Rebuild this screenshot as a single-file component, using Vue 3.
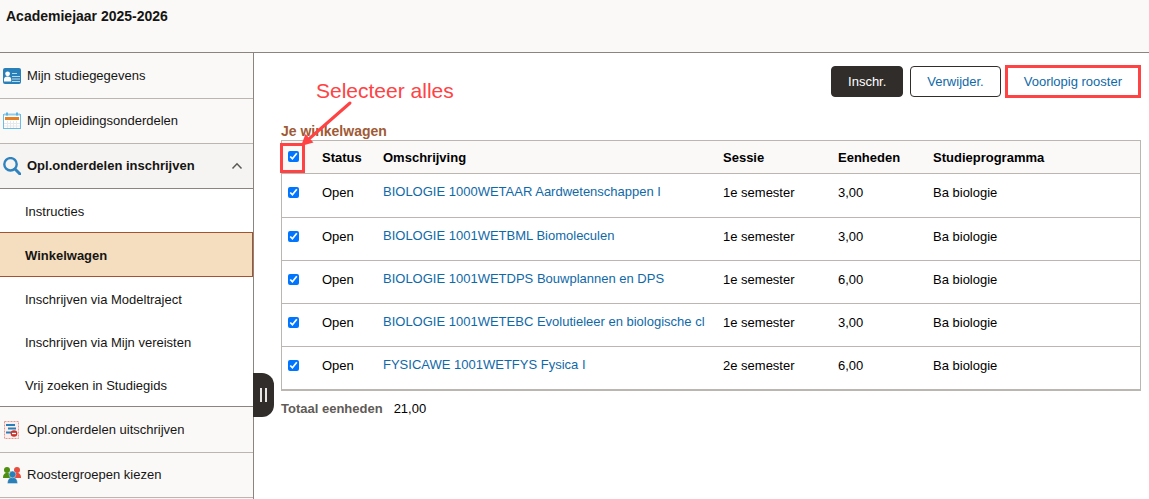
<script setup>
import { ref, computed } from 'vue'

const subItems = [
  'Instructies',
  'Winkelwagen',
  'Inschrijven via Modeltraject',
  'Inschrijven via Mijn vereisten',
  'Vrij zoeken in Studiegids',
]
const active = ref('Winkelwagen')
const open = ref(true)

const courses = ref([
  { title: 'BIOLOGIE 1000WETAAR Aardwetenschappen I', session: '1e semester', units: '3,00', checked: true },
  { title: 'BIOLOGIE 1001WETBML Biomoleculen', session: '1e semester', units: '3,00', checked: true },
  { title: 'BIOLOGIE 1001WETDPS Bouwplannen en DPS', session: '1e semester', units: '6,00', checked: true },
  { title: 'BIOLOGIE 1001WETEBC Evolutieleer en biologische cl', session: '1e semester', units: '3,00', checked: true },
  { title: 'FYSICAWE 1001WETFYS Fysica I', session: '2e semester', units: '6,00', checked: true },
])

const all = computed({
  get: () => courses.value.every((c) => c.checked),
  set: (v) => courses.value.forEach((c) => (c.checked = v)),
})
</script>

<template>
  <div class="page">
    <header class="top"><h1>Academiejaar 2025-2026</h1></header>
    <div class="body">
      <nav class="side">
        <a class="item" href="#">
          <svg class="icon" viewBox="0 0 18 18">
            <rect x="0" y="1" width="18" height="16" rx="2" fill="#2980b9" />
            <circle cx="4.600" cy="6.800" r="2.400" fill="#fff" />
            <path d="M1 14.500v-2c0-2 1.200-3 3.600-3s3.600 1 3.600 3v2z" fill="#fff" />
            <path d="M9 6.500h5M9 9.500h8M9 12h8M9 14.500h8" stroke="#b9d9ee" stroke-width="1" />
          </svg>
          <span>Mijn studiegegevens</span>
        </a>
        <a class="item" href="#">
          <svg class="icon" viewBox="0 0 18 18">
            <rect x="0.500" y="2.500" width="17" height="14" fill="#fff" stroke="#6bbce6" />
            <path d="M1 2.500h16" stroke="#8fcdec" stroke-width="2" />
            <path d="M4.500 9v7M7.500 9v7M10.500 9v7M13.500 9v7M1 11.500h16M1 14h16" stroke="#e6eaed" stroke-width="1" />
            <rect x="2" y="5" width="14" height="3" fill="#e67e22" />
            <path d="M4 0.500v3M14 0.500v3" stroke="#5bb3e2" stroke-width="2" />
          </svg>
          <span>Mijn opleidingsonderdelen</span>
        </a>
        <button class="item group" type="button" :aria-expanded="open" @click="open = !open">
          <svg class="icon" viewBox="0 0 18 18">
            <circle cx="7.500" cy="7.300" r="6.200" fill="none" stroke="#2e83bf" stroke-width="2.400" />
            <path d="M12 12l5 5" stroke="#2e83bf" stroke-width="3" stroke-linecap="round" />
          </svg>
          <span>Opl.onderdelen inschrijven</span>
          <svg class="chevron" viewBox="0 0 12 8">
            <path d="M1.500 6.500L6 1.800l4.500 4.700" fill="none" stroke="#5c5955" stroke-width="1.500" />
          </svg>
        </button>
        <div v-if="open" class="sub">
          <a
            v-for="s in subItems"
            :key="s"
            href="#"
            :class="{ active: s === active }"
            @click.prevent="active = s"
          >{{ s }}</a>
        </div>
        <a class="item" href="#">
          <svg class="icon" viewBox="0 0 18 18">
            <rect x="1.500" y="0.500" width="14" height="17" fill="#fbeeec" stroke="#dd9a92" stroke-dasharray="2 1" />
            <path d="M3 4h9M5 7.500h8M3 11.500h6" stroke="#2980b9" stroke-width="2" />
            <circle cx="11" cy="12.500" r="3.300" fill="#c8322b" />
            <path d="M9 12.500h4" stroke="#fff" stroke-width="1.300" />
          </svg>
          <span>Opl.onderdelen uitschrijven</span>
        </a>
        <a class="item" href="#">
          <svg class="icon" viewBox="0 0 18 18">
            <g fill="#4f8f0f">
              <circle cx="4" cy="4" r="3" />
              <path d="M0 12c0-3 1-5 4-5s4 2 4 5z" />
            </g>
            <g fill="#e74c3c">
              <circle cx="14" cy="4" r="3" />
              <path d="M10 12c0-3 1-5 4-5s4 2 4 5z" />
            </g>
            <g fill="#2980b9" stroke="#faf9f8" stroke-width="0.400">
              <path d="M4.500 17.500c0-4 1.500-6 5-6s5 2 5 6z" />
              <circle cx="9.500" cy="8.500" r="3.400" />
            </g>
          </svg>
          <span>Roostergroepen kiezen</span>
        </a>
      </nav>
      <main class="main">
        <button class="handle" type="button" aria-label="Menu in- of uitklappen"><i></i><i></i></button>
        <div class="actions">
          <button class="btn dark" type="button">Inschr.</button>
          <button class="btn" type="button">Verwijder.</button>
          <button class="btn marked" type="button">Voorlopig rooster</button>
        </div>
        <section class="cart">
          <h2>Je winkelwagen</h2>
          <table>
            <colgroup>
              <col class="c-check" /><col class="c-status" /><col class="c-title" />
              <col class="c-session" /><col class="c-units" /><col />
            </colgroup>
            <thead>
              <tr>
                <th><input v-model="all" type="checkbox" aria-label="Selecteer alles" /></th>
                <th>Status</th>
                <th>Omschrijving</th>
                <th>Sessie</th>
                <th>Eenheden</th>
                <th>Studieprogramma</th>
              </tr>
            </thead>
            <tbody>
              <tr v-for="c in courses" :key="c.title">
                <td><input v-model="c.checked" type="checkbox" :aria-label="c.title" /></td>
                <td>Open</td>
                <td class="title"><a href="#">{{ c.title }}</a></td>
                <td>{{ c.session }}</td>
                <td>{{ c.units }}</td>
                <td>Ba biologie</td>
              </tr>
            </tbody>
          </table>
          <div class="note">
            <span>Selecteer alles</span>
            <svg viewBox="0 0 60 50">
              <path d="M52 3L12 38" stroke="#ff4243" stroke-width="3" stroke-linecap="round" />
              <path d="M3 46L7.500 34L15.500 42.500z" fill="#ff4243" />
            </svg>
            <i></i>
          </div>
          <p class="total"><b>Totaal eenheden</b><span>21,00</span></p>
        </section>
      </main>
    </div>
  </div>
</template>

<style>
body {
  margin: 0;
  background: #fff;
}
</style>

<style scoped>
* {
  box-sizing: border-box;
}
.page {
  display: flex;
  flex-direction: column;
  min-height: 100vh;
  font-family: "Liberation Sans", Arial, sans-serif;
  font-size: 13px;
  line-height: 16px;
  color: #161513;
}
.top {
  height: 53px;
  padding: 8px 6px;
  background: #faf9f8;
  border-bottom: 1px solid #8b8580;
}
h1 {
  margin: 0;
  font-size: 14px;
  line-height: 16px;
}
a {
  text-decoration: none;
}
button {
  font: inherit;
  cursor: pointer;
}
.body {
  display: flex;
  flex: 1;
}
.side {
  flex: 0 0 254px;
  padding-top: 1px;
  background: #faf9f8;
  border-right: 1px solid #8b8580;
}
.item {
  display: flex;
  align-items: center;
  gap: 6px;
  width: 100%;
  height: 45px;
  padding: 0 10px 0 3px;
  border: 0;
  border-bottom: 1px solid #bcb6b1;
  background: #faf9f8;
  color: #161513;
  text-align: left;
}
.group {
  background: #f5f4f2;
  border-bottom-color: #8b8580;
  font-weight: bold;
}
.icon {
  flex: none;
  width: 18px;
  height: 18px;
}
.chevron {
  width: 12px;
  height: 8px;
  margin-left: auto;
}
.sub {
  margin-bottom: 1px;
  background: #fff;
  border-bottom: 1px solid #8b8580;
}
.sub a {
  display: flex;
  align-items: center;
  height: 43px;
  padding: 2px 25px 0;
  color: #161513;
}
.sub a.active {
  height: 45px;
  border: 1px solid #a35330;
  border-left: 0;
  background: #f5debf;
  font-weight: bold;
}
.main {
  position: relative;
  flex: 1;
  min-width: 0;
  padding: 12px 8px 0 27px;
}
.handle {
  position: absolute;
  left: -1px;
  top: 320px;
  display: flex;
  align-items: center;
  justify-content: center;
  gap: 3px;
  width: 21px;
  height: 44px;
  padding: 0;
  border: 0;
  border-radius: 0 12px 12px 0;
  background: #312d2a;
}
.handle i {
  width: 2px;
  height: 14px;
  background: #e8e6e4;
}
.actions {
  display: flex;
  align-items: center;
  justify-content: flex-end;
  gap: 7px;
}
.btn {
  height: 31px;
  padding: 0 16px;
  border: 1px solid #312d2a;
  border-radius: 4px;
  background: #fff;
  color: #0f69a8;
}
.dark {
  background: #312d2a;
  color: #fff;
}
.marked {
  height: 33px;
  margin-left: -3px;
  border: 3px solid #ff4243;
  border-radius: 0;
}
.cart {
  position: relative;
  margin-top: 25px;
}
h2 {
  margin: 0;
  font-size: 14px;
  line-height: 17px;
  color: #a05a35;
}
table {
  width: 100%;
  table-layout: fixed;
  border-collapse: separate;
  border-spacing: 0;
  border: 1px solid #bcb6b1;
  border-bottom-width: 2px;
}
.c-check {
  width: 32px;
}
.c-status {
  width: 61px;
}
.c-title {
  width: 340px;
}
.c-session {
  width: 115px;
}
.c-units {
  width: 95px;
}
th,
td {
  height: 43px;
  padding: 11px 0 0 8px;
  border-bottom: 1px solid #bcb6b1;
  text-align: left;
  vertical-align: top;
  white-space: nowrap;
  color: #000;
}
th {
  height: 33px;
  padding-top: 9px;
  background: #faf9f8;
}
tbody tr:first-child td {
  height: 44px;
}
tbody tr:last-child td {
  height: 42px;
  border-bottom: 0;
}
td.title {
  padding-top: 10px;
}
td a {
  color: #0f69a8;
}
th:first-child,
td:first-child {
  padding-left: 6px;
}
th:first-child {
  padding-top: 8px;
}
input {
  display: block;
  width: 11px;
  height: 11px;
  margin: 2px 0 0;
}
.note {
  position: absolute;
  left: -1px;
  top: -44px;
  color: #ff4243;
}
.note span {
  position: absolute;
  left: 36px;
  top: 0;
  font-size: 21px;
  line-height: 24px;
  white-space: nowrap;
}
.note svg {
  position: absolute;
  left: 18px;
  top: 21px;
  width: 60px;
  height: 50px;
}
.note i {
  position: absolute;
  left: 0;
  top: 64px;
  width: 25px;
  height: 30px;
  border: 3px solid #ff4243;
  pointer-events: none;
}
.total {
  display: flex;
  gap: 11px;
  margin: 10px 0 0;
  color: #000;
}
.total b {
  color: #5f5b57;
}
</style>
